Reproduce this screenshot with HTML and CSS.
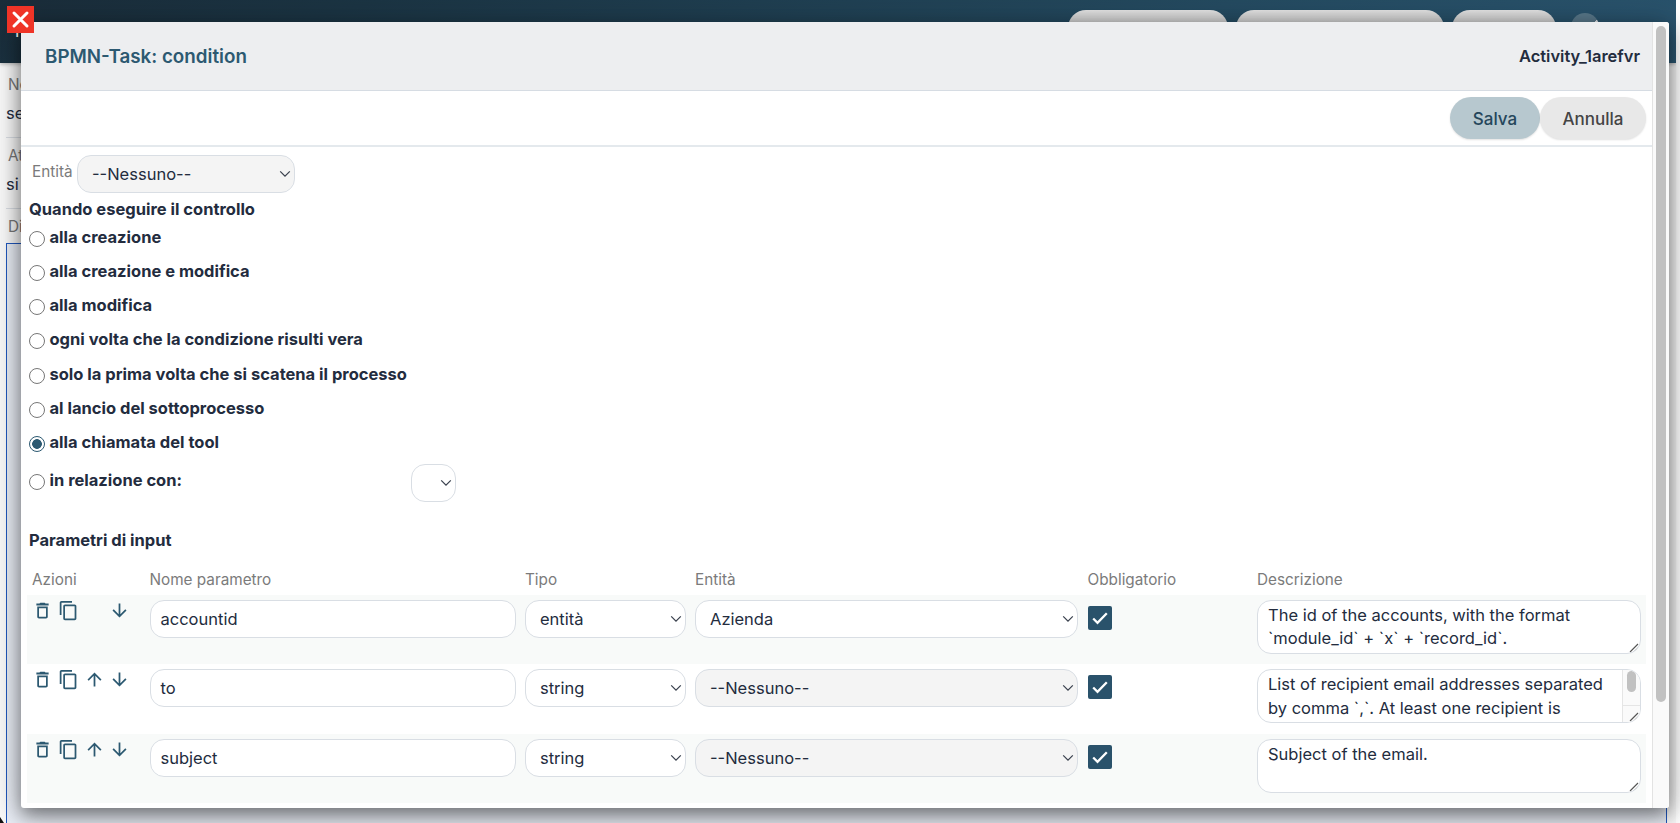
FILE: index.html
```
<!DOCTYPE html>
<html lang="it">
<head>
<meta charset="utf-8">
<title>BPMN-Task: condition</title>
<link rel="stylesheet" href="styles.css">
</head>
<body>
<svg class="defs" width="0" height="0">
  <symbol id="trash" viewBox="0 0 24 24"><path d="M6 19c0 1.100.9 2 2 2h8c1.100 0 2-.9 2-2V7.500H6V19zM8 9.500h8V19H8V9.500zM15.500 4l-1-1h-5l-1 1H5v2.400h14V4z"/></symbol>
  <symbol id="copy" viewBox="0 0 24 24"><path d="M16 1H4c-1.100 0-2 .9-2 2v14h2V3h12V1zm3 4H8c-1.100 0-2 .9-2 2v14c0 1.100.9 2 2 2h11c1.100 0 2-.9 2-2V7c0-1.100-.9-2-2-2zm0 16H8V7h11v14z"/></symbol>
  <symbol id="down" viewBox="0 0 24 24"><path d="M20 12l-1.410-1.410L13 16.170V4h-2v12.170l-5.580-5.590L4 12l8 8 8-8z"/></symbol>
  <symbol id="up" viewBox="0 0 24 24"><path d="M4 12l1.410 1.410L11 7.830V20h2V7.830l5.580 5.590L20 12l-8-8-8 8z"/></symbol>
  <symbol id="chev" viewBox="0 0 12 8"><path d="M1.200 1.400 6 6.200l4.800-4.800" fill="none" stroke="#39404d" stroke-width="1.250"/></symbol>
  <symbol id="check" viewBox="0 0 24 24"><path d="M5.200 12.500l4.300 4.300 9.300-9.600" fill="none" stroke="#fff" stroke-width="2.300"/></symbol>
  <symbol id="grip" viewBox="0 0 10 10"><path d="M1 9 9 1M5 9.200 9.200 5" fill="none" stroke="#555" stroke-width="1.100"/></symbol>
</svg>

<div class="page">
  <header class="topbar">
    <span class="brand">n</span>
    <nav class="pills"><i class="pill p1"></i><i class="pill p2"></i><i class="pill p3"></i><i class="avatar"></i></nav>
  </header>
  <div class="behind">
    <div class="meta"><label>No</label><b>se</b></div>
    <div class="meta"><label>At</label><b>si</b></div>
    <div class="meta last"><label>Di</label></div>
    <div class="canvas"></div>
  </div>
</div>
<i class="corner"></i>

<section class="modal">
  <div class="content">
    <div class="head"><h1>BPMN-Task: condition</h1><span class="ident">Activity_1arefvr</span></div>
    <div class="actions"><button class="save">Salva</button><button class="cancel">Annulla</button></div>
    <div class="entity"><label>Entità</label>
      <div class="select off wide"><span>--Nessuno--</span><svg><use href="#chev"/></svg></div></div>
    <h2 class="when">Quando eseguire il controllo</h2>
    <div class="radios">
      <label><i></i><span>alla creazione</span></label>
      <label><i></i><span>alla creazione e modifica</span></label>
      <label><i></i><span>alla modifica</span></label>
      <label><i></i><span>ogni volta che la condizione risulti vera</span></label>
      <label><i></i><span>solo la prima volta che si scatena il processo</span></label>
      <label><i></i><span>al lancio del sottoprocesso</span></label>
      <label><i class="on"></i><span>alla chiamata del tool</span></label>
      <label class="relation"><i></i><span>in relazione con:</span><div class="select small"><svg><use href="#chev"/></svg></div></label>
    </div>
    <h2 class="params">Parametri di input</h2>
    <div class="table">
      <div class="row th"><span>Azioni</span><span>Nome parametro</span><span>Tipo</span><span>Entità</span><span>Obbligatorio</span><span>Descrizione</span></div>
      <div class="row odd">
        <div class="icons"><svg><use href="#trash"/></svg><svg><use href="#copy"/></svg><svg></svg><svg><use href="#down"/></svg></div>
        <div class="input">accountid</div>
        <div class="select"><span>entità</span><svg><use href="#chev"/></svg></div>
        <div class="select"><span>Azienda</span><svg><use href="#chev"/></svg></div>
        <div class="box"><svg><use href="#check"/></svg></div>
        <div class="area">The id of the accounts, with the format<br>`module_id` + `x` + `record_id`.<svg class="grip"><use href="#grip"/></svg></div>
      </div>
      <div class="row">
        <div class="icons"><svg><use href="#trash"/></svg><svg><use href="#copy"/></svg><svg><use href="#up"/></svg><svg><use href="#down"/></svg></div>
        <div class="input">to</div>
        <div class="select"><span>string</span><svg><use href="#chev"/></svg></div>
        <div class="select off"><span>--Nessuno--</span><svg><use href="#chev"/></svg></div>
        <div class="box"><svg><use href="#check"/></svg></div>
        <div class="area">List of recipient email addresses separated<br>by comma `,`. At least one recipient is<div class="mini"><i></i></div><svg class="grip"><use href="#grip"/></svg></div>
      </div>
      <div class="row odd">
        <div class="icons"><svg><use href="#trash"/></svg><svg><use href="#copy"/></svg><svg><use href="#up"/></svg><svg><use href="#down"/></svg></div>
        <div class="input">subject</div>
        <div class="select"><span>string</span><svg><use href="#chev"/></svg></div>
        <div class="select off"><span>--Nessuno--</span><svg><use href="#chev"/></svg></div>
        <div class="box"><svg><use href="#check"/></svg></div>
        <div class="area">Subject of the email.<svg class="grip"><use href="#grip"/></svg></div>
      </div>
    </div>
  </div>
  <div class="scroll"><i></i></div>
</section>
<svg class="close" viewBox="0 0 27 27"><rect width="27" height="27" fill="#ef3427"/><path d="M7 7l13 13M20 7 7 20" stroke="#fff" stroke-width="3" stroke-linecap="round"/></svg>
</body>
</html>
```
FILE: styles.css
```
* { box-sizing: border-box; }
body { margin: 0; width: 1680px; height: 823px; overflow: hidden; position: relative; background: #fff; color: #232c3e; font: 16.500px/24px Inter, "Liberation Sans", sans-serif; white-space: nowrap; }
h1, h2 { margin: 0; font-size: 16.500px; line-height: 24px; font-weight: 700; }
.defs { position: absolute; }
.page { width: 1676px; height: 823px; display: flex; flex-direction: column; background: #f8f8f8; overflow: hidden; }
.topbar { height: 63px; flex: none; display: flex; justify-content: space-between; padding: 10px 77px 0 15px; background: linear-gradient(165deg, #1a2c39 0%, #1b3443 20%, #244a60 65%, #2b5671 100%); box-shadow: 0 1px 4px rgba(0,0,0,.3); }
.brand { color: #fff; font-size: 18px; line-height: 41px; }
.pills { display: flex; gap: 8px; }
.pill { height: 42px; border-radius: 18px; background: linear-gradient(#e2e2e2, #cbcbcb 13px); }
.p1 { width: 160px; } .p2 { width: 208px; } .p3 { width: 104px; }
.avatar { width: 28px; height: 28px; margin: 3px 0 0 7px; border-radius: 50%; background: linear-gradient(135deg, transparent 50%, #dfe3e6 50%) 23px 5px / 5px 5px no-repeat #587789; }
.behind { flex: 1; display: flex; flex-direction: column; padding: 8px 9px 0 6px; }
.meta { height: 71px; padding-top: 2px; border-bottom: 1px solid #d9dde3; display: flex; flex-direction: column; gap: 4px; }
.meta:first-child { height: 67px; }
.meta label { color: #777; font-size: 15.300px; padding-left: 2px; }
.meta:nth-child(2) { padding-top: 6px; }
.meta b { font-weight: 400; }
.meta.last { height: 34px; padding-top: 6px; border: 0; }
.canvas { flex: 1; border: 1px solid #2057bd; border-bottom: 0; background: #e9edf5; }
.corner { position: absolute; left: 0; bottom: 0; width: 4px; height: 6px; background: #111; clip-path: polygon(0 0, 100% 100%, 0 100%); }
.close { position: absolute; left: 7px; top: 6px; width: 27px; height: 27px; }

.modal { position: absolute; left: 21px; top: 22px; width: 1648px; height: 786px; display: flex; background: #fff; border-radius: 3px; overflow: hidden; box-shadow: 0 7px 18px rgba(0,0,0,.42), 0 4px 32px rgba(0,0,0,.26); }
.content { width: 1631px; display: flex; flex-direction: column; }
.scroll { flex: 1; border-left: 1px solid #e3e3e3; background: #fafafa; padding: 4px 0 0 3px; }
.scroll i { display: block; width: 10px; height: 676px; border-radius: 5px; background: #c1c1c1; }
.head { height: 69px; flex: none; display: flex; justify-content: space-between; align-items: center; padding: 0 12px 0 24px; background: #edeef0; border-bottom: 1px solid #d6dce3; }
.head h1 { font-size: 18.800px; font-weight: 600; color: #2c5971; padding-top: 2px; }
.ident { font-weight: 600; }
.actions { height: 56px; flex: none; display: flex; justify-content: flex-end; padding: 6px 6px 0 0; border-bottom: 2px solid #e4e9ed; }
button { height: 42px; border: 0; padding: 1px 0 0; border-radius: 21px; font: 500 17px/24px Inter, sans-serif; box-shadow: 0 1px 2px rgba(0,0,0,.12); }
.save { width: 90px; background: #b7c8cf; color: #25465b; }
.cancel { width: 106px; background: #e8e8e8; color: #444; }
.entity { display: flex; padding: 8px 0 0 11px; height: 50px; }
.entity label { width: 45px; font-size: 15.300px; color: #7b7b7b; padding-top: 5px; }
.select { height: 38px; border: 1px solid #d9dee4; border-radius: 14px; background: #fff; display: flex; align-items: center; justify-content: space-between; padding: 0 3px 0 14px; }
.select svg { width: 12px; height: 8px; flex: none; }
.select.off { background: #f4f4f4; }
.wide { width: 218px; }
.small { width: 45px; justify-content: flex-end; }
.when { padding: 0 0 0 8px; height: 28px; }
.radios { display: flex; flex-direction: column; }
.radios label { height: 34.150px; display: flex; font-size: 16.500px; font-weight: 700; padding-left: 8px; }
.radios i { width: 16px; height: 16px; flex: none; margin: 6px 4.500px 0 0; border: 1px solid #777; border-radius: 50%; background: #fff; }
.radios i.on { border: 1.500px solid #2c5971; background: radial-gradient(circle, #2c5971 0 4.500px, #fff 5.200px); }
.radios .relation { height: 64px; padding-top: 4px; }
.relation span { width: 361.500px; }
.relation .select { margin-top: -4px; }
.params { padding-left: 8px; height: 40px; }
.table { padding-left: 6px; width: 1625px; }
.row { display: grid; grid-template-columns: 108px 366px 160.500px 383px 160px 384px; column-gap: 9.500px; padding: 5px 0 0 5px; height: 69.500px; align-items: start; }
.row.odd { background: #f8faf9; }
.th { height: 26.800px; padding-top: 0; color: #7b7b7b; font-size: 15.300px; line-height: 24px; }
.icons { display: flex; gap: 4.800px; fill: #2c5971; }
.icons svg { width: 21px; height: 21px; }
.input { height: 38px; border: 1px solid #d9dee4; border-radius: 14px; background: #fff; padding: 6px 10px; }
.box { width: 24px; height: 24px; margin-top: 6px; border-radius: 2px; background: #2a526b; }
.box svg { display: block; width: 24px; height: 24px; }
.area { position: relative; height: 54px; border: 1px solid #d9dee4; border-radius: 14px; background: #fff; padding: 3px 10px; line-height: 23.600px; overflow: hidden; }
.grip { position: absolute; right: 1px; bottom: 0; width: 10px; height: 10px; }
.mini { position: absolute; right: 0; top: 0; width: 18px; height: 52px; border-left: 1px solid #e5e5e5; background: linear-gradient(#e5e5e5, #e5e5e5) 0 35px / 100% 1px no-repeat #fafafa; padding: 1px 4px; }
.mini i { display: block; width: 9px; height: 21px; border-radius: 5px; background: #c1c1c1; }
```
